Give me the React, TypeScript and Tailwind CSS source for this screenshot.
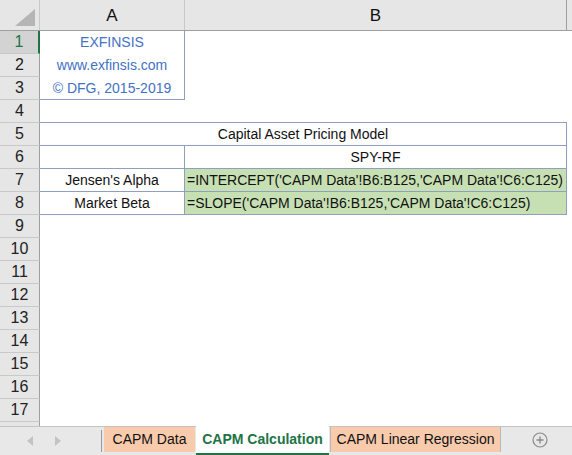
import React from 'react';

const rowNums = Array.from({ length: 18 }, (_, i) => i + 1);

const tableBorder = 'border-[#8ea0bd]';

function RowHead({ n }: { n: number }) {
  const active = n === 1;
  return (
    <div
      className={
        'w-[40px] shrink-0 h-full flex items-center justify-center text-[16px] border-b border-b-[#c9c9c9] ' +
        (active
          ? 'bg-[#d3d3d3] text-[#217346] border-r-2 border-r-[#217346]'
          : 'bg-[#e6e6e6] text-[#222] border-r border-r-[#9f9f9f]')
      }
    >
      {n}
    </div>
  );
}

function Cells({ n }: { n: number }) {
  const blue = 'text-[#4472c4]';
  if (n >= 1 && n <= 3) {
    const txt = ['EXFINSIS', 'www.exfinsis.com', '© DFG, 2015-2019'][n - 1];
    return (
      <>
        <div
          className={
            'w-[145px] shrink-0 h-full flex items-center justify-center border-r ' +
            tableBorder +
            ' ' +
            blue +
            (n === 3 ? ' border-b' : '')
          }
        >
          {txt}
        </div>
        <div className="flex-1" />
      </>
    );
  }
  if (n === 4) {
    return (
      <div className={'w-[527px] shrink-0 h-full border-b ' + tableBorder} />
    );
  }
  if (n === 5) {
    return (
      <div
        className={
          'w-[527px] shrink-0 h-full flex items-center justify-center border-b border-r ' +
          tableBorder
        }
      >
        Capital Asset Pricing Model
      </div>
    );
  }
  if (n >= 6 && n <= 8) {
    const a = ['', "Jensen's Alpha", 'Market Beta'][n - 6];
    const b = [
      'SPY-RF',
      "=INTERCEPT('CAPM Data'!B6:B125,'CAPM Data'!C6:C125)",
      "=SLOPE('CAPM Data'!B6:B125,'CAPM Data'!C6:C125)",
    ][n - 6];
    return (
      <>
        <div
          className={
            'w-[145px] shrink-0 h-full flex items-center justify-center border-b border-r ' +
            tableBorder
          }
        >
          {a}
        </div>
        <div
          className={
            'w-[382px] shrink-0 h-full flex items-center border-b border-r whitespace-nowrap ' +
            tableBorder +
            (n === 6 ? ' justify-center' : ' bg-[#c6e0b4] pl-[2px]')
          }
        >
          {b}
        </div>
      </>
    );
  }
  return <div className="flex-1" />;
}

export default function App() {
  return (
    <div
      className="w-[572px] h-[455px] overflow-hidden bg-white flex flex-col text-[14px] text-[#111]"
      style={{ fontFamily: '"Liberation Sans", Arial, sans-serif' }}
    >
      {/* column headers */}
      <div className="h-[31px] shrink-0 flex bg-[#e6e6e6] border-b border-[#9f9f9f]">
        <div className="w-[40px] shrink-0 border-r border-[#c9c9c9] flex items-end justify-end pr-[4px] pb-[4px]">
          <svg width="20" height="17" viewBox="0 0 20 17">
            <polygon points="20,0 20,17 0,17" fill="#b5b5b5" />
          </svg>
        </div>
        <div className="w-[145px] shrink-0 border-r border-[#c9c9c9] flex items-center justify-center text-[17px] pt-[1px]">
          A
        </div>
        <div className="w-[382px] shrink-0 border-r border-[#9f9f9f] flex items-center justify-center text-[17px] pt-[1px]">
          B
        </div>
        <div className="flex-1" />
      </div>

      {/* rows */}
      <div className="flex-1 overflow-hidden">
        {rowNums.map((n) => (
          <div key={n} className="h-[23px] flex">
            <RowHead n={n} />
            <Cells n={n} />
          </div>
        ))}
      </div>

      {/* sheet tabs */}
      <div className="h-[29px] shrink-0 flex items-stretch bg-[#e8e8e8] border-t border-[#c3c3c3] text-[14px]">
        <div className="w-[101px] shrink-0 flex items-center pl-[27px] gap-[22px]">
          <svg width="6" height="10" viewBox="0 0 6 10">
            <polygon points="6,0 6,10 0,5" fill="#c3c3c3" />
          </svg>
          <svg width="6" height="10" viewBox="0 0 6 10">
            <polygon points="0,0 0,10 6,5" fill="#c3c3c3" />
          </svg>
        </div>
        <div className="w-px my-[3px] bg-[#9a9a9a]" />
        <div className="w-[91px] ml-[2px] mb-[3px] bg-[#f8cbad] flex items-center justify-center">
          CAPM Data
        </div>
        <div className="w-[133px] ml-[1px] bg-white flex items-center justify-center font-bold text-[#217346] border-b-2 border-[#217346] mt-[-1px]">
          CAPM Calculation
        </div>
        <div className="w-[170px] ml-[1px] mb-[3px] bg-[#f8cbad] border-l border-[#b9b9b9] flex items-center justify-center">
          CAPM Linear Regression
        </div>
        <div className="w-px mb-[3px] bg-[#b9b9b9]" />
        <div className="flex-1 flex items-center justify-center pl-[7px] pb-[2px]">
          <svg width="16" height="16" viewBox="0 0 16 16">
            <circle cx="8" cy="8" r="7" fill="none" stroke="#8a8a8a" strokeWidth="1.2" />
            <path d="M8 4.5v7M4.5 8h7" stroke="#8a8a8a" strokeWidth="1.4" />
          </svg>
        </div>
      </div>
    </div>
  );
}
